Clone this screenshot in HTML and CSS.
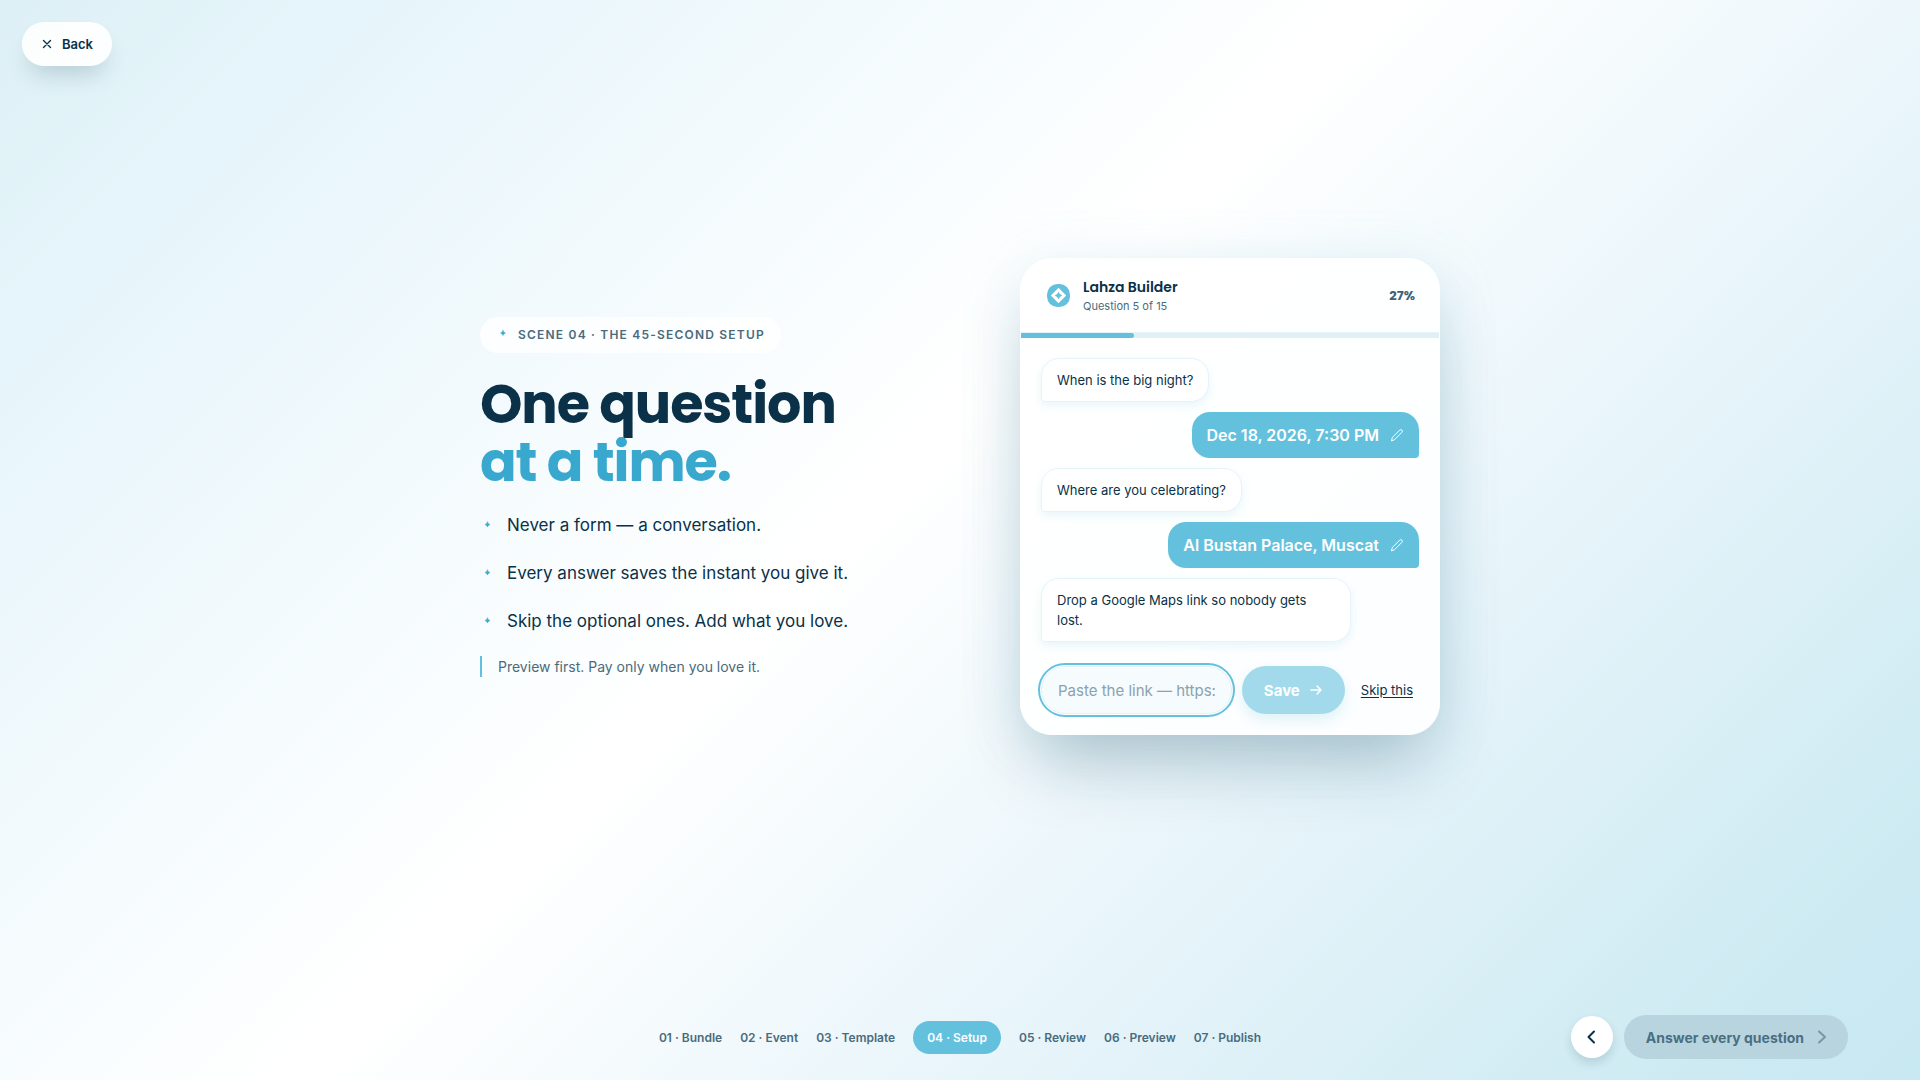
FILE: index.html
```html
<!DOCTYPE html>
<html lang="en">
<head>
  <meta charset="UTF-8">
  <meta name="viewport" content="width=device-width, initial-scale=1.0">
  <title>Lahza - The 45-second setup</title>
  <link rel="stylesheet" href="styles.css">
</head>
<body>
  <a class="back" href="#">
    <svg width="10" height="10" viewBox="0 0 10 10" aria-hidden="true"><path d="M1.5 1.5l7 7M8.5 1.5l-7 7"/></svg>
    Back
  </a>

  <main class="stage">
    <div class="scene">
      <section class="intro">
        <p class="eyebrow">
          <svg class="spark" width="14" height="14" viewBox="0 0 14 14" aria-hidden="true"><path d="M7 2.500Q7.500 4.500 9.500 5Q7.500 5.500 7 7.500Q6.500 5.500 4.500 5Q6.500 4.500 7 2.500z"/></svg>
          Scene 04 · The 45-second setup
        </p>
        <h1>One question<br><span>at a time.</span></h1>
        <ul class="points">
          <li>
            <svg class="spark" width="14" height="14" viewBox="0 0 14 14" aria-hidden="true"><path d="M7.500 4Q8 6 10 6.500Q8 7 7.500 9Q7 7 5 6.500Q7 6 7.500 4z"/></svg>
            Never a form — a conversation.
          </li>
          <li>
            <svg class="spark" width="14" height="14" viewBox="0 0 14 14" aria-hidden="true"><path d="M7.500 4Q8 6 10 6.500Q8 7 7.500 9Q7 7 5 6.500Q7 6 7.500 4z"/></svg>
            Every answer saves the instant you give it.
          </li>
          <li>
            <svg class="spark" width="14" height="14" viewBox="0 0 14 14" aria-hidden="true"><path d="M7.500 4Q8 6 10 6.500Q8 7 7.500 9Q7 7 5 6.500Q7 6 7.500 4z"/></svg>
            Skip the optional ones. Add what you love.
          </li>
        </ul>
        <p class="note">Preview first. Pay only when you love it.</p>
      </section>

      <section class="card">
        <header class="card-head">
          <svg class="logo" width="23" height="23" viewBox="0 0 24 24" aria-hidden="true">
            <rect width="24" height="24" rx="11" fill="#64c1de"/>
            <path d="M12 4l8 8-8 8-8-8z" fill="#fff"/>
            <path d="M12 8Q12.900 11.100 16 12Q12.900 12.900 12 16Q11.100 12.900 8 12Q11.100 11.100 12 8z" fill="#64c1de"/>
          </svg>
          <div class="card-title">
            <h2>Lahza Builder</h2>
            <p>Question 5 of 15</p>
          </div>
          <span class="percent">27%</span>
        </header>
        <div class="progress"><div class="progress-fill" style="width: 27%"></div></div>

        <div class="chat">
          <p class="bubble ask">When is the big night?</p>
          <button class="bubble reply" type="button">
            Dec 18, 2026, 7:30 PM
            <svg width="14" height="14" viewBox="0 0 14 14" aria-hidden="true"><path d="M1.500 12.500l1-3.200 7.200-7.200a1.500 1.500 0 0 1 2.200 2.200l-7.200 7.200z"/></svg>
          </button>
          <p class="bubble ask">Where are you celebrating?</p>
          <button class="bubble reply" type="button">
            Al Bustan Palace, Muscat
            <svg width="14" height="14" viewBox="0 0 14 14" aria-hidden="true"><path d="M1.500 12.500l1-3.200 7.200-7.200a1.500 1.500 0 0 1 2.200 2.200l-7.200 7.200z"/></svg>
          </button>
          <p class="bubble ask">Drop a Google Maps link so nobody gets lost.</p>
        </div>

        <form class="answer">
          <input type="text" aria-label="Google Maps link" placeholder="Paste the link — https://">
          <button class="save" type="submit" disabled>
            Save
            <svg width="14" height="14" viewBox="0 0 14 14" aria-hidden="true"><path d="M2 7h10M8 3l4 4-4 4"/></svg>
          </button>
          <button class="skip" type="button">Skip this</button>
        </form>
      </section>
    </div>
  </main>

  <footer class="bottom">
    <nav class="steps" aria-label="Scenes">
      <a href="#">01 · Bundle</a>
      <a href="#">02 · Event</a>
      <a href="#">03 · Template</a>
      <a href="#" class="active" aria-current="step">04 · Setup</a>
      <a href="#">05 · Review</a>
      <a href="#">06 · Preview</a>
      <a href="#">07 · Publish</a>
    </nav>
    <div class="controls">
      <button class="prev" type="button" aria-label="Previous scene">
        <svg width="16" height="16" viewBox="0 0 16 16" aria-hidden="true"><path d="M10 2.500L4.500 8l5.500 5.500"/></svg>
      </button>
      <button class="next" type="button" disabled>
        Answer every question
        <svg width="16" height="16" viewBox="0 0 16 16" aria-hidden="true"><path d="M5 2.500L11 8l-6 5.500"/></svg>
      </button>
    </div>
  </footer>
</body>
</html>
```
FILE: styles.css
```css
* {
  box-sizing: border-box;
}
body {
  margin: 0;
  min-height: 100vh;
  display: flex;
  flex-direction: column;
  font-family: Inter, sans-serif;
  color: #0a3147;
  background: linear-gradient(135deg, #ddf0f5 0%, #e6f5fb 12%, #ffffff 46%, #e6f4fa 70%, #cdeaf2 92%, #c8e8f2 100%);
}
h1, h2, p, ul {
  margin: 0;
  padding: 0;
}
h1, h2 {
  font-family: Poppins, Inter, sans-serif;
}
a {
  color: inherit;
  text-decoration: none;
}
button, input {
  font-family: inherit;
  color: inherit;
}
button {
  border: none;
  cursor: pointer;
}
svg {
  flex: none;
  fill: none;
  stroke: currentColor;
  stroke-linecap: round;
  stroke-linejoin: round;
}

.back {
  position: absolute;
  top: 22px;
  left: 22px;
  display: flex;
  align-items: center;
  gap: 10px;
  height: 44px;
  padding: 0 19px 0 20px;
  border-radius: 22px;
  background: rgba(255, 255, 255, 0.9);
  box-shadow: 0 14px 24px -8px rgba(10, 49, 71, 0.22);
  font-size: 13px;
  font-weight: 600;
}
.back svg {
  stroke-width: 1.4;
}

.stage {
  flex: 1;
  display: flex;
  align-items: center;
  justify-content: center;
  padding: 0 24px 2px;
}
.scene {
  width: 100%;
  max-width: 960px;
  display: flex;
  align-items: center;
  justify-content: space-between;
  gap: 48px;
}

.eyebrow {
  display: flex;
  align-items: center;
  width: fit-content;
  gap: 8px;
  height: 36px;
  padding: 0 16px;
  border-radius: 18px;
  background: rgba(255, 255, 255, 0.8);
  color: #4a6b7c;
  font-size: 12px;
  font-weight: 600;
  letter-spacing: 0.1em;
  text-transform: uppercase;
}
.spark {
  fill: #38a8cf;
  stroke: #38a8cf;
  stroke-width: 0.5;
}
.logo {
  stroke: none;
}
h1 {
  margin-top: 22px;
  font-size: 54px;
  line-height: 58px;
  font-weight: 700;
  letter-spacing: -0.02em;
}
h1 span {
  color: #38a8cf;
}
.points {
  margin-top: 20px;
  list-style: none;
  display: flex;
  flex-direction: column;
  gap: 20px;
  font-size: 17px;
  line-height: 28px;
}
.points li {
  display: flex;
  align-items: center;
  gap: 13px;
}
.note {
  margin-top: 21px;
  padding-left: 16px;
  border-left: 2px solid #64c1de;
  color: #4a6b7c;
  font-size: 14px;
  line-height: 21px;
}

.card {
  width: 420px;
  overflow: hidden;
  border: 1px solid #fff;
  border-radius: 32px;
  background: rgba(255, 255, 255, 0.88);
  box-shadow: 0 40px 70px -16px rgba(10, 49, 71, 0.26), 0 8px 60px rgba(100, 193, 222, 0.16);
}
.card-head {
  display: flex;
  align-items: center;
  gap: 13px;
  height: 74px;
  padding: 0 24px 0 26px;
  border-bottom: 1px solid #e6f3f8;
}
.card-title {
  flex: 1;
}
.card-title h2 {
  font-size: 14px;
  line-height: 20px;
  font-weight: 600;
}
.card-title p {
  color: #4a6b7c;
  font-size: 11px;
  line-height: 18px;
}
.percent {
  color: #3d6277;
  font-family: Poppins, Inter, sans-serif;
  font-size: 13px;
  font-weight: 700;
}
.progress {
  height: 5px;
  background: #e0f0f6;
}
.progress-fill {
  height: 100%;
  border-radius: 0 3px 3px 0;
  background: #64c1de;
}
.chat {
  display: flex;
  flex-direction: column;
  align-items: flex-start;
  gap: 10px;
  padding: 20px 20px 24px;
}
.bubble {
  border-radius: 18px;
}
.ask {
  max-width: 310px;
  padding: 11px 15px;
  border: 1px solid #e6f3f9;
  border-bottom-left-radius: 4px;
  background: #fff;
  box-shadow: 0 4px 10px rgba(100, 193, 222, 0.14);
  font-size: 13px;
  line-height: 20px;
}
.reply {
  align-self: flex-end;
  display: flex;
  align-items: center;
  gap: 11px;
  height: 46px;
  padding: 0 15px;
  border-bottom-right-radius: 4px;
  background: #64c1de;
  color: #fff;
  font-size: 16px;
  font-weight: 600;
}
.answer {
  display: flex;
  align-items: center;
  gap: 10px;
  padding: 0 20px 20px;
}
.answer input {
  flex: 1;
  min-width: 0;
  height: 48px;
  padding: 0 16px;
  border: 1px solid #e0f1f7;
  border-radius: 24px;
  outline: 2px solid #64c1de;
  outline-offset: 1px;
  background: #f6fbfd;
  font-size: 15px;
}
.answer input::placeholder {
  color: #8aa2b0;
}
.save {
  display: flex;
  align-items: center;
  gap: 9px;
  height: 48px;
  padding: 0 22px;
  border-radius: 24px;
  background: #a2daeb;
  box-shadow: 0 6px 14px rgba(100, 193, 222, 0.2);
  color: #fff;
  font-size: 15px;
  font-weight: 700;
}
.save svg {
  stroke-width: 1.5;
}
.skip {
  padding: 0 6px;
  background: none;
  font-size: 13px;
  text-decoration: underline;
  text-underline-offset: 2px;
  white-space: nowrap;
}

.bottom {
  display: grid;
  grid-template-columns: 1fr auto 1fr;
  align-items: center;
  padding: 20px 72px 21px;
}
.steps {
  grid-column: 2;
  display: flex;
  align-items: center;
  gap: 18px;
  color: #4a6b7c;
  font-size: 12px;
  font-weight: 600;
}
.steps .active {
  padding: 0 14px;
  border-radius: 17px;
  background: #64c1de;
  color: #fff;
  line-height: 33px;
}
.controls {
  display: flex;
  align-items: center;
  justify-content: flex-end;
  gap: 11px;
}
.prev {
  display: grid;
  place-items: center;
  width: 42px;
  height: 42px;
  padding: 0;
  border-radius: 50%;
  background: #fff;
  box-shadow: 0 5px 10px rgba(10, 49, 71, 0.14);
}
.prev svg, .next svg {
  stroke-width: 2;
}
.next {
  display: flex;
  align-items: center;
  gap: 10px;
  height: 44px;
  padding: 0 18px 0 22px;
  border-radius: 22px;
  background: #b8d5df;
  color: #4a6f83;
  font-size: 14px;
  font-weight: 700;
}
.next svg {
  opacity: 0.6;
}
```
